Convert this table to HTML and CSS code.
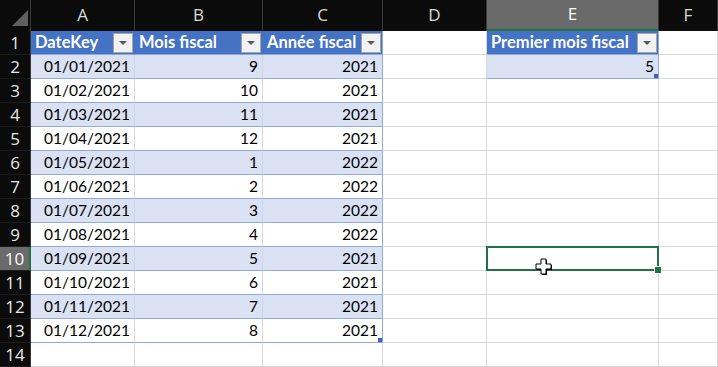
FILE: index.html
```html
<!DOCTYPE html>
<html lang="fr">
<head>
    <meta charset="UTF-8">
    <meta name="viewport" content="width=device-width, initial-scale=1.0">
    <title>Calendrier fiscal</title>
    <link rel="stylesheet" href="styles.css">
</head>
<body>
    <div class="sheet">
        <!-- column letters -->
        <div class="row col-heads">
            <div class="corner">
                <svg width="30" height="30" viewBox="0 0 30 30"><polygon points="12,26 28,26 28,10" fill="#5f5f5f"/></svg>
            </div>
            <div class="col-head">A</div>
            <div class="col-head">B</div>
            <div class="col-head">C</div>
            <div class="col-head">D</div>
            <div class="col-head selected">E</div>
            <div class="col-head">F</div>
        </div>

        <div class="row">
            <div class="row-head">1</div>
            <div class="cell tbl-head">DateKey<span class="filter"></span></div>
            <div class="cell tbl-head">Mois fiscal<span class="filter"></span></div>
            <div class="cell tbl-head last">Année fiscal<span class="filter"></span></div>
            <div class="cell"></div>
            <div class="cell tbl-head last">Premier mois fiscal<span class="filter"></span></div>
            <div class="cell"></div>
        </div>
        <div class="row">
            <div class="row-head">2</div>
            <div class="cell tbl band num">01/01/2021</div>
            <div class="cell tbl band num">9</div>
            <div class="cell tbl band num last">2021</div>
            <div class="cell"></div>
            <div class="cell tbl band num last end">5<span class="resize"></span></div>
            <div class="cell"></div>
        </div>
        <div class="row">
            <div class="row-head">3</div>
            <div class="cell tbl num">01/02/2021</div>
            <div class="cell tbl num">10</div>
            <div class="cell tbl num last">2021</div>
            <div class="cell"></div>
            <div class="cell"></div>
            <div class="cell"></div>
        </div>
        <div class="row">
            <div class="row-head">4</div>
            <div class="cell tbl band num">01/03/2021</div>
            <div class="cell tbl band num">11</div>
            <div class="cell tbl band num last">2021</div>
            <div class="cell"></div>
            <div class="cell"></div>
            <div class="cell"></div>
        </div>
        <div class="row">
            <div class="row-head">5</div>
            <div class="cell tbl num">01/04/2021</div>
            <div class="cell tbl num">12</div>
            <div class="cell tbl num last">2021</div>
            <div class="cell"></div>
            <div class="cell"></div>
            <div class="cell"></div>
        </div>
        <div class="row">
            <div class="row-head">6</div>
            <div class="cell tbl band num">01/05/2021</div>
            <div class="cell tbl band num">1</div>
            <div class="cell tbl band num last">2022</div>
            <div class="cell"></div>
            <div class="cell"></div>
            <div class="cell"></div>
        </div>
        <div class="row">
            <div class="row-head">7</div>
            <div class="cell tbl num">01/06/2021</div>
            <div class="cell tbl num">2</div>
            <div class="cell tbl num last">2022</div>
            <div class="cell"></div>
            <div class="cell"></div>
            <div class="cell"></div>
        </div>
        <div class="row">
            <div class="row-head">8</div>
            <div class="cell tbl band num">01/07/2021</div>
            <div class="cell tbl band num">3</div>
            <div class="cell tbl band num last">2022</div>
            <div class="cell"></div>
            <div class="cell"></div>
            <div class="cell"></div>
        </div>
        <div class="row">
            <div class="row-head">9</div>
            <div class="cell tbl num">01/08/2021</div>
            <div class="cell tbl num">4</div>
            <div class="cell tbl num last">2022</div>
            <div class="cell"></div>
            <div class="cell"></div>
            <div class="cell"></div>
        </div>
        <div class="row">
            <div class="row-head selected">10</div>
            <div class="cell tbl band num">01/09/2021</div>
            <div class="cell tbl band num">5</div>
            <div class="cell tbl band num last">2021</div>
            <div class="cell"></div>
            <div class="cell active">
                <svg class="pointer" width="17" height="17" viewBox="0 0 17 17">
                    <polygon points="6,1 11,1 11,6 16,6 16,11 11,11 11,16 6,16 6,11 1,11 1,6 6,6" fill="#000" transform="translate(1 1)"/>
                    <polygon points="6,1 11,1 11,6 16,6 16,11 11,11 11,16 6,16 6,11 1,11 1,6 6,6" fill="#fff" stroke="#000" stroke-width="1"/>
                </svg>
            </div>
            <div class="cell"></div>
        </div>
        <div class="row">
            <div class="row-head">11</div>
            <div class="cell tbl num">01/10/2021</div>
            <div class="cell tbl num">6</div>
            <div class="cell tbl num last">2021</div>
            <div class="cell"></div>
            <div class="cell"></div>
            <div class="cell"></div>
        </div>
        <div class="row">
            <div class="row-head">12</div>
            <div class="cell tbl band num">01/11/2021</div>
            <div class="cell tbl band num">7</div>
            <div class="cell tbl band num last">2021</div>
            <div class="cell"></div>
            <div class="cell"></div>
            <div class="cell"></div>
        </div>
        <div class="row">
            <div class="row-head">13</div>
            <div class="cell tbl num">01/12/2021</div>
            <div class="cell tbl num">8</div>
            <div class="cell tbl num last end">2021<span class="resize"></span></div>
            <div class="cell"></div>
            <div class="cell"></div>
            <div class="cell"></div>
        </div>
        <div class="row">
            <div class="row-head">14</div>
            <div class="cell"></div>
            <div class="cell"></div>
            <div class="cell"></div>
            <div class="cell"></div>
            <div class="cell"></div>
            <div class="cell"></div>
        </div>
    </div>
</body>
</html>
```

FILE: styles.css
```css
* {
    margin: 0;
    padding: 0;
    box-sizing: border-box;
}

body {
    background-color: #fff;
    font-family: 'Lato', 'Noto Sans', sans-serif;
    overflow: hidden;
}

.sheet {
    width: 718px;
}

.row {
    display: grid;
    grid-template-columns: 31px 104px 128px 120px 104px 172px 59px;
    height: 24px;
}

/* column letters */
.col-heads {
    height: 31px;
    background-color: #0b0b0b;
}

.corner {
    border-right: 1px solid #3a3a3a;
}

.corner svg {
    display: block;
}

.col-head {
    color: #d9d9d9;
    font-family: 'Open Sans', sans-serif;
    font-size: 17px;
    line-height: 30px;
    text-align: center;
    border-right: 1px solid #3a3a3a;
}

.col-head.selected {
    background-color: #6a6a6a;
    color: #fff;
    border-bottom: 2px solid #217346;
    line-height: 28px;
}

/* row numbers */
.row-head {
    background-color: #0b0b0b;
    color: #e6e6e6;
    font-family: 'Open Sans', sans-serif;
    font-size: 17px;
    line-height: 23px;
    text-align: center;
    border-right: 1px solid #3a3a3a;
    border-bottom: 1px solid #1c1c1c;
}

.row-head.selected {
    background-color: #6a6a6a;
    color: #fff;
    border-right: 2px solid #217346;
}

.cell {
    position: relative;
    border-right: 1px solid #d9d9d9;
    border-bottom: 1px solid #d9d9d9;
    padding: 0 4px;
    font-size: 15.5px;
    line-height: 23px;
    color: #000;
    white-space: nowrap;
}

/* table styling */
.tbl-head {
    display: flex;
    justify-content: space-between;
    align-items: center;
    padding-right: 1px;
    background-color: #4472c4;
    color: #fff;
    font-weight: bold;
    font-size: 16.5px;
    border-right-color: #4472c4;
    border-bottom-color: #8ea9db;
}

.filter {
    position: relative;
    flex-shrink: 0;
    width: 20px;
    height: 20px;
    background-color: #f2f2f2;
    border: 1px solid #a6a6a6;
}

.filter::after {
    content: "";
    position: absolute;
    left: 5px;
    top: 7px;
    border-left: 4px solid transparent;
    border-right: 4px solid transparent;
    border-top: 4px solid #595959;
}

.tbl {
    border-bottom-color: #8ea9db;
}

.band {
    background-color: #d9e1f2;
    border-right-color: #cdd6ea;
}

.last {
    border-right-color: #8ea9db;
}

.num {
    text-align: right;
}

.resize {
    position: absolute;
    right: 0;
    bottom: 0;
    width: 4px;
    height: 4px;
    background-color: #3b5fc0;
}

/* current cell */
.active::after {
    content: "";
    position: absolute;
    left: -1px;
    top: -1px;
    right: -1px;
    bottom: -1px;
    border: 2px solid #217346;
}

.active::before {
    content: "";
    position: absolute;
    right: -4px;
    bottom: -4px;
    width: 6px;
    height: 6px;
    background-color: #217346;
    border: 1px solid #fff;
    z-index: 2;
}

.pointer {
    position: absolute;
    left: 48px;
    top: 11px;
    z-index: 3;
}
```
